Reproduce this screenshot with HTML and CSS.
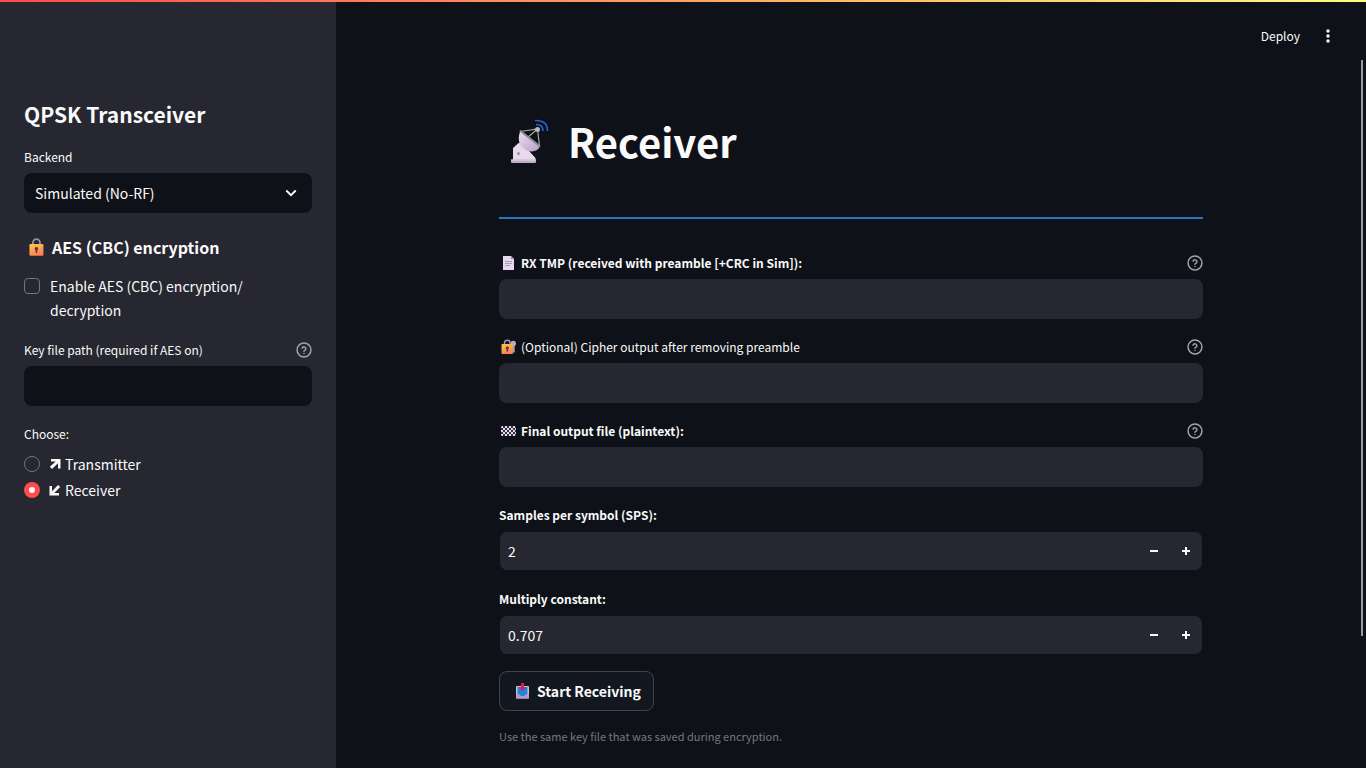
FILE: index.html
```html
<!DOCTYPE html>
<html lang="en">
<head>
<meta charset="utf-8">
<title>QPSK Transceiver</title>
<link rel="stylesheet" href="styles.css">
</head>
<body>
<svg class="sprite" aria-hidden="true">
  <defs>
    <linearGradient id="gold" x1="0" y1="0" x2="0.4" y2="1"><stop offset="0" stop-color="#ffc94a"/><stop offset="1" stop-color="#f98250"/></linearGradient>
    <linearGradient id="dish" x1="0" y1="0" x2="1" y2="1"><stop offset="0" stop-color="#eadff0"/><stop offset="1" stop-color="#b99fc6"/></linearGradient>
    <pattern id="checks" width="4" height="4" patternUnits="userSpaceOnUse"><rect width="4" height="4" fill="#e4dbea"/><rect width="2" height="2" fill="#3b2f45"/><rect x="2" y="2" width="2" height="2" fill="#3b2f45"/></pattern>
    <symbol id="help" viewBox="0 0 24 24"><g fill="none" stroke="currentColor" stroke-width="2.2" stroke-linecap="round" stroke-linejoin="round"><circle cx="12" cy="12" r="10.4"/><path d="M9.1 9.2a3 3 0 0 1 5.8 1c0 2-3 2.500-3 3.800M12 17.200v.1"/></g></symbol>
  </defs>
</svg>
<div class="app">
  <div class="rainbow"></div>
  <aside class="sidebar">
    <h2 class="brand">QPSK Transceiver</h2>
    <div class="field">
      <label class="label" for="backend">Backend</label>
      <div class="select-wrap">
        <select class="control select" id="backend"><option>Simulated (No-RF)</option></select>
        <svg class="chevron" viewBox="0 0 12 12" aria-hidden="true"><path d="M1.3 3.500l4.700 4.700L10.700 3.500" fill="none" stroke="currentColor" stroke-width="1.900"/></svg>
      </div>
    </div>
    <h3 class="section">
      <svg class="section-icon" viewBox="0 0 24 24" aria-hidden="true"><path d="M8.500 11V6.500a4 4 0 0 1 8 0V11" fill="none" stroke="#9994a5" stroke-width="2"/><rect x="4.500" y="8" width="16" height="13.500" rx="1.500" fill="url(#gold)"/><path d="M12.500 11.500a2 2 0 0 1 1 3.700V18h-2v-2.800a2 2 0 0 1 1-3.700z" fill="#5b3150"/></svg>
      AES (CBC) encryption
    </h3>
    <label class="choice check-choice"><input class="check" type="checkbox"><span>Enable AES (CBC) encryption/<wbr>decryption</span></label>
    <div class="field">
      <div class="label-row"><label class="label" for="key">Key file path (required if AES on)</label><button class="help" type="button" aria-label="Help"><svg viewBox="0 0 24 24"><use href="#help"/></svg></button></div>
      <input class="control" id="key" type="text">
    </div>
    <fieldset class="radios">
      <legend class="label">Choose:</legend>
      <label class="choice"><input class="radio" type="radio" name="mode"><svg class="arrow" viewBox="0 0 12 12" aria-hidden="true"><path d="M2 1h9.500v9.500H9V5.300L3 11 .8 8.800 6.700 3.400H2z" fill="currentColor"/></svg><span>Transmitter</span></label>
      <label class="choice"><input class="radio" type="radio" name="mode" checked><svg class="arrow" viewBox="0 0 12 12" aria-hidden="true"><path d="M10 11.500H.5V2H3v5.200L9 1l2.200 2L5.300 9H10z" fill="currentColor"/></svg><span>Receiver</span></label>
    </fieldset>
  </aside>
  <div class="page">
    <header class="toolbar">
      <button class="deploy" type="button">Deploy</button>
      <button class="menu" type="button" aria-label="Menu"><svg viewBox="0 0 16 16"><g fill="currentColor"><circle cx="8" cy="3" r="1.700"/><circle cx="8" cy="8" r="1.700"/><circle cx="8" cy="13" r="1.700"/></g></svg></button>
    </header>
    <main class="content">
      <h1 class="title">
        <svg class="title-icon" viewBox="0 0 56 52" aria-hidden="true">
          <path d="M14 43V32l5-4.500q3-2 6 2L36.500 42v2H14z" fill="#e6daeb"/>
          <circle cx="19.500" cy="37.500" r="1.500" fill="#9b8ca7"/>
          <rect x="12" y="43.500" width="25" height="3.500" rx="1" fill="#c2acca"/>
          <rect x="12" y="43.500" width="25" height="1.400" fill="#d3cbd5"/>
          <path d="M21.500 15.500L38.500 13 28 22M38.500 13L40.500 30" fill="none" stroke="#aaa6ad" stroke-width="1.200"/>
          <path d="M21.500 15c-4.500 9 0 18 8 20 5 1.200 9.500-.4 11.500-4.500z" fill="url(#dish)"/>
          <path d="M21.500 15l19 15" stroke="#918b97" stroke-width="2" stroke-linecap="round"/>
          <circle cx="38.500" cy="13.500" r="2.500" fill="#bdb8c0"/>
          <path d="M37 8.500q7 0 7 6.500M36 4.500q12.500-.5 12.500 10.500" fill="none" stroke="#2667d8" stroke-width="1.600"/>
        </svg>
        Receiver
      </h1>
      <hr class="rule">
      <div class="form">
        <div class="field">
          <div class="label-row"><label class="label strong" for="rx"><svg class="label-icon" viewBox="0 0 18 18" aria-hidden="true"><path d="M4 2h8l3 3v11H4z" fill="#e4d9ed"/><path d="M12 2v3h3z" fill="#9b87ab"/><path d="M6 7.500h7M6 9.500h7M6 11.500h5" stroke="#a99ab5" stroke-width="1"/></svg>RX TMP (received with preamble [+CRC in Sim]):</label><button class="help" type="button" aria-label="Help"><svg viewBox="0 0 24 24"><use href="#help"/></svg></button></div>
          <input class="control" id="rx" type="text">
        </div>
        <div class="field">
          <div class="label-row"><label class="label" for="cipher"><svg class="label-icon" viewBox="0 0 18 18" aria-hidden="true"><path d="M13.500 6v8.500h2.200V6z" fill="#a99bb9"/><circle cx="14.300" cy="5.500" r="2.700" fill="#b9aac9"/><path d="M5.500 8V5a2.800 2.800 0 0 1 5.600 0v3" fill="none" stroke="#9c96a5" stroke-width="1.500"/><rect x="2.500" y="6" width="11.500" height="10" rx="1" fill="url(#gold)"/><path d="M8.300 8.500a1.500 1.500 0 0 1 .8 2.800v2.200H7.500v-2.200a1.500 1.500 0 0 1 .8-2.800z" fill="#5b3150"/></svg>(Optional) Cipher output after removing preamble</label><button class="help" type="button" aria-label="Help"><svg viewBox="0 0 24 24"><use href="#help"/></svg></button></div>
          <input class="control" id="cipher" type="text">
        </div>
        <div class="field">
          <div class="label-row"><label class="label strong" for="out"><svg class="label-icon" viewBox="0 0 18 18" aria-hidden="true"><rect x="2" y="4" width="15" height="10" rx="1.500" fill="url(#checks)"/></svg>Final output file (plaintext):</label><button class="help" type="button" aria-label="Help"><svg viewBox="0 0 24 24"><use href="#help"/></svg></button></div>
          <input class="control" id="out" type="text">
        </div>
        <div class="field">
          <label class="label strong" for="sps">Samples per symbol (SPS):</label>
          <div class="number"><input class="number-input" id="sps" type="text" inputmode="numeric" value="2"><button class="step" type="button" aria-label="Decrease"><svg viewBox="0 0 8 8"><path d="M0 3h8v2H0z" fill="currentColor"/></svg></button><button class="step" type="button" aria-label="Increase"><svg viewBox="0 0 8 8"><path d="M3 0h2v3h3v2H5v3H3V5H0V3h3z" fill="currentColor"/></svg></button></div>
        </div>
        <div class="field">
          <label class="label strong" for="mult">Multiply constant:</label>
          <div class="number"><input class="number-input" id="mult" type="text" inputmode="decimal" value="0.707"><button class="step" type="button" aria-label="Decrease"><svg viewBox="0 0 8 8"><path d="M0 3h8v2H0z" fill="currentColor"/></svg></button><button class="step" type="button" aria-label="Increase"><svg viewBox="0 0 8 8"><path d="M3 0h2v3h3v2H5v3H3V5H0V3h3z" fill="currentColor"/></svg></button></div>
        </div>
        <button class="start" type="button"><svg class="start-icon" viewBox="0 0 20 20" aria-hidden="true"><rect x="4" y="5" width="13" height="12.500" rx="1" fill="#c9bad8"/><path d="M5.500 6h10v7l-2.500 2.500H8L5.500 13z" fill="#2482d8"/><path d="M4 13.500h3.500q.5 1.800 3 1.800t3-1.800H17v4H4z" fill="#b19bc5"/><path d="M9 2h3v4h2l-3.500 4L7 6h2z" fill="#d51f52"/></svg>Start Receiving</button>
        <p class="caption">Use the same key file that was saved during encryption.</p>
      </div>
    </main>
    <div class="scroll-thumb"></div>
  </div>
</div>
</body>
</html>
```
FILE: styles.css
```css
* { box-sizing: border-box; }
body {
  margin: 0;
  background: #0e1117;
  color: #fafafa;
  font-family: "Source Sans Pro", "Noto Sans CJK SC", "Noto Sans", sans-serif;
  font-size: 14px;
  line-height: 24px;
}
button, input, select { font: inherit; color: inherit; }
button { border: 0; padding: 0; background: none; cursor: pointer; }
h1, h2, h3, p { margin: 0; }
svg { display: block; flex: none; }
.sprite { position: absolute; width: 0; height: 0; }

.app { position: relative; display: flex; height: 100vh; overflow: hidden; }
.rainbow {
  position: absolute;
  inset: 0 0 auto;
  height: 2px;
  z-index: 2;
  background: linear-gradient(90deg, #ff4b4b, #fffd80);
}

.sidebar {
  display: flex;
  flex: none;
  flex-direction: column;
  gap: 16px;
  width: 336px;
  padding: 100px 24px 24px;
  background: #262730;
}
.sidebar .control { background: #0e1117; }
.brand { font-size: 21px; line-height: 29px; font-weight: 700; }
.section {
  display: flex;
  align-items: center;
  gap: 4px;
  padding-top: 8px;
  font-size: 16px;
  line-height: 21px;
}
.section-icon { width: 24px; height: 21px; }

.field { display: flex; flex-direction: column; gap: 4px; }
.label-row { display: flex; align-items: center; justify-content: space-between; }
.label { display: flex; align-items: center; gap: 4px; font-size: 12px; line-height: 24px; }
.strong { font-weight: 700; }
.label-icon { width: 18px; height: 18px; }
.help { color: #a3a4a9; }
.help svg { width: 16px; height: 16px; }
.control {
  width: 100%;
  height: 40px;
  padding: 0 11px;
  border: 0;
  border-radius: 8px;
  background: #262730;
}
.select-wrap { display: grid; align-items: center; }
.select { grid-area: 1 / 1; appearance: none; }
.chevron {
  grid-area: 1 / 1;
  justify-self: end;
  width: 12px;
  height: 12px;
  margin-right: 15px;
  pointer-events: none;
}

.choice { display: flex; align-items: center; }
.check-choice { align-items: flex-start; gap: 10px; }
.check, .radio {
  flex: none;
  width: 16px;
  height: 16px;
  margin: 0;
  border: 1px solid #75767d;
  appearance: none;
}
.check { margin-top: 4px; border-radius: 4px; }
.radio { margin-right: 9px; border-radius: 50%; }
.radio:checked { border: 5px solid #ff4b4b; background: #fafafa; }
.radios { margin: 0; padding: 0; border: 0; }
.radios .choice + .choice { margin-top: 2px; }
.radios .label { padding: 0; margin-bottom: 6px; }
.arrow { width: 12px; height: 12px; margin-right: 4px; }

.page { position: relative; flex: 1; min-width: 0; }
.toolbar {
  display: flex;
  align-items: center;
  justify-content: flex-end;
  gap: 20px;
  height: 60px;
  padding: 12px 30px 0 0;
}
.deploy { font-size: 12px; }
.menu svg { width: 16px; height: 16px; }
.scroll-thumb {
  position: absolute;
  top: 60px;
  right: 3px;
  width: 2px;
  height: 75%;
  background: #9a9a9c;
}

.content { max-width: 736px; margin: 0 auto; padding: 36px 16px; }
.title {
  display: flex;
  align-items: center;
  gap: 13px;
  padding: 19px 0 17px;
  font-size: 40px;
  line-height: 53px;
}
.title-icon { width: 56px; height: 52px; }
.rule { height: 2px; margin: 32px 0; border: 0; background: #2a74c2; }
.form { display: flex; flex-direction: column; gap: 16px; }
.number {
  display: flex;
  height: 40px;
  border: 1px solid transparent;
  border-radius: 8px;
  background: #262730 padding-box;
}
.number-input {
  flex: 1;
  min-width: 0;
  padding: 0 8px;
  border: 0;
  background: none;
}
.step { display: grid; place-items: center; width: 32px; }
.step svg { width: 8px; height: 8px; }
.start {
  display: flex;
  align-items: center;
  align-self: flex-start;
  gap: 5px;
  height: 40px;
  padding: 0 12px;
  border: 1px solid #41444c;
  border-radius: 8px;
  background: #131720;
  font-weight: 700;
}
.start-icon { width: 20px; height: 20px; }
.caption { color: #77787c; font-size: 11px; line-height: 18px; }
```
